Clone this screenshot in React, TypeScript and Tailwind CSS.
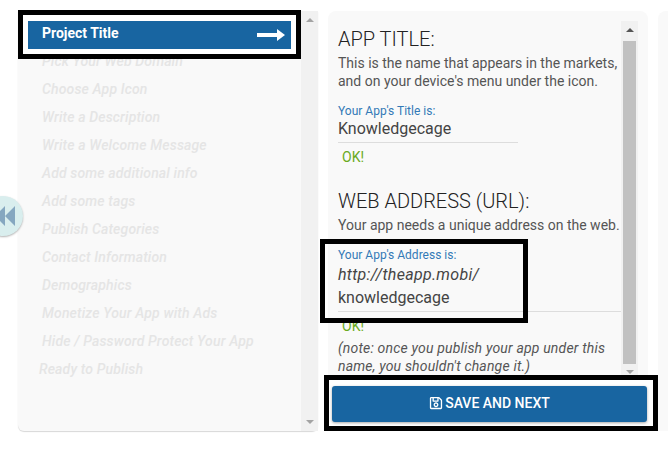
import { FaRegSave } from "react-icons/fa"

const steps = [
  "Pick Your Web Domain",
  "Choose App Icon",
  "Write a Description",
  "Write a Welcome Message",
  "Add some additional info",
  "Add some tags",
  "Publish Categories",
  "Contact Information",
  "Demographics",
  "Monetize Your App with Ads",
  "Hide / Password Protect Your App",
]

export default function App() {
  return (
    <div className="relative flex h-[474px] w-[668px] gap-[10px] overflow-hidden bg-white pl-[18px] pt-[11px] font-['Roboto',sans-serif]">
      <div className="flex h-[420px] w-[300px] shrink-0 rounded-b-md bg-[#f9f9f9] shadow-[0_1px_1px_#d8d8d8]">
        <div className="flex-1">
          <div className="relative z-10 -mt-px h-[49px] border-[5px] border-black bg-white p-[5px] pt-[6px]">
            <div className="flex h-[28px] items-center justify-between bg-[#1865a1] pl-[14px] pr-[6px] text-[14px] font-bold text-white">
              <span className="-mt-[3px]">Project Title</span>
              <svg width="28" height="14" viewBox="0 0 28 14" fill="white" className="-mt-[1px]">
                <path d="M0 5h20V1l8 6-8 6V9H0z" />
              </svg>
            </div>
          </div>
          <ul className="-mt-[12px] pl-[24px] text-[14px] font-medium italic tracking-[0.15px] text-[#e5e5e5]">
            {steps.map((step) => (
              <li key={step} className="flex h-[28px] items-center">
                {step}
              </li>
            ))}
            <li className="-ml-[3px] flex h-[28px] items-center">Ready to Publish</li>
          </ul>
        </div>
        <div className="flex w-[17px] shrink-0 flex-col items-center justify-between bg-[#f1f1f1] pb-[7px] pt-[7px]">
          <div className="h-0 w-0 border-x-[4px] border-b-[4px] border-x-transparent border-b-[#a3a3a3]" />
          <div className="h-0 w-0 border-x-[4px] border-t-[4px] border-x-transparent border-t-[#a3a3a3]" />
        </div>
      </div>

      <div className="flex h-[420px] w-[320px] shrink-0 flex-col rounded-lg bg-[#f9f9f9] pl-[10px] pt-[10px]">
        <div className="flex h-[356px] shrink-0">
          <div className="flex-1 text-[14px] leading-[18px] text-[#555]">
            <h2 className="mt-[6px] text-[20px] font-light leading-[24px] text-[#222]">APP TITLE:</h2>
            <p className="mt-[3px]">This is the name that appears in the markets,<br />and on your device's menu under the icon.</p>
            <p className="mt-[13px] text-[12px] leading-[16px] text-[#337ab7]">Your App's Title is:</p>
            <div className="-mt-px box-content h-[23px] w-[180px] border-b border-[#ddd] pb-[1px] text-[16px] leading-[22px] text-[#444]">Knowledgecage</div>
            <p className="mt-[5px] pl-[4px] text-[#6aaa22]">OK!</p>
            <h2 className="mt-[23px] text-[20px] font-light leading-[24px] text-[#222]">WEB ADDRESS (URL):</h2>
            <p className="mt-[3px]">Your app needs a unique address on the web.</p>
            <p className="mt-[13px] text-[12px] leading-[16px] text-[#337ab7]">Your App's Address is:</p>
            <div className="border-b border-[#ddd] pb-[2px] text-[16px] leading-[22px] text-[#444]">
              <div className="mt-[1px] italic tracking-[0.3px]">http://theapp.mobi/</div>
              <div className="mt-[1px]">knowledgecage</div>
            </div>
            <p className="mt-[5px] pl-[4px] text-[#6aaa22]">OK!</p>
            <p className="mt-[4px] italic tracking-[0.18px]">(note: once you publish your app under this<br />name, you shouldn't change it.)</p>
          </div>
          <div className="mr-[10px] flex w-[17px] shrink-0 flex-col items-center bg-[#f1f1f1] pb-[3px] pt-[7px]">
            <div className="h-0 w-0 border-x-[4px] border-b-[4px] border-x-transparent border-b-[#555]" />
            <div className="mb-[6px] mt-[9px] w-[13px] flex-1 bg-[#c1c1c1]" />
            <div className="h-0 w-0 border-x-[4px] border-t-[4px] border-x-transparent border-t-[#a3a3a3]" />
          </div>
        </div>
        <div className="relative z-10 -ml-[14px] -mt-[2px] h-[57px] w-[334px] border-[5px] border-black bg-white pl-[3px] pt-[6px]">
          <button className="flex h-[36px] w-[315px] items-center justify-center gap-[2px] rounded-[3px] bg-[#1865a1] pb-[2px] text-[14px] font-medium text-white shadow-[0_1px_3px_rgba(0,0,0,0.35)]">
            <FaRegSave className="h-[14px] w-[14px]" />
            SAVE AND NEXT
          </button>
        </div>
      </div>

      <div className="h-[420px] flex-1 rounded-tl-lg bg-[#f9f9f9]" />

      {/* annotation box over the address field */}
      <div className="absolute left-[320px] top-[239px] h-[84px] w-[208px] border-[5px] border-black" />

      <div className="absolute -left-[17px] top-[196px] flex h-[40px] w-[40px] items-center justify-end rounded-full bg-[#d9eeee] pr-[8px] shadow-[0_1px_2px_rgba(0,0,0,0.3)]">
        <svg width="20" height="20" viewBox="0 0 20 20" fill="#85a7c0">
          <path d="M0 10 10 0v20zM10 10 20 0v20z" />
        </svg>
      </div>
    </div>
  )
}
